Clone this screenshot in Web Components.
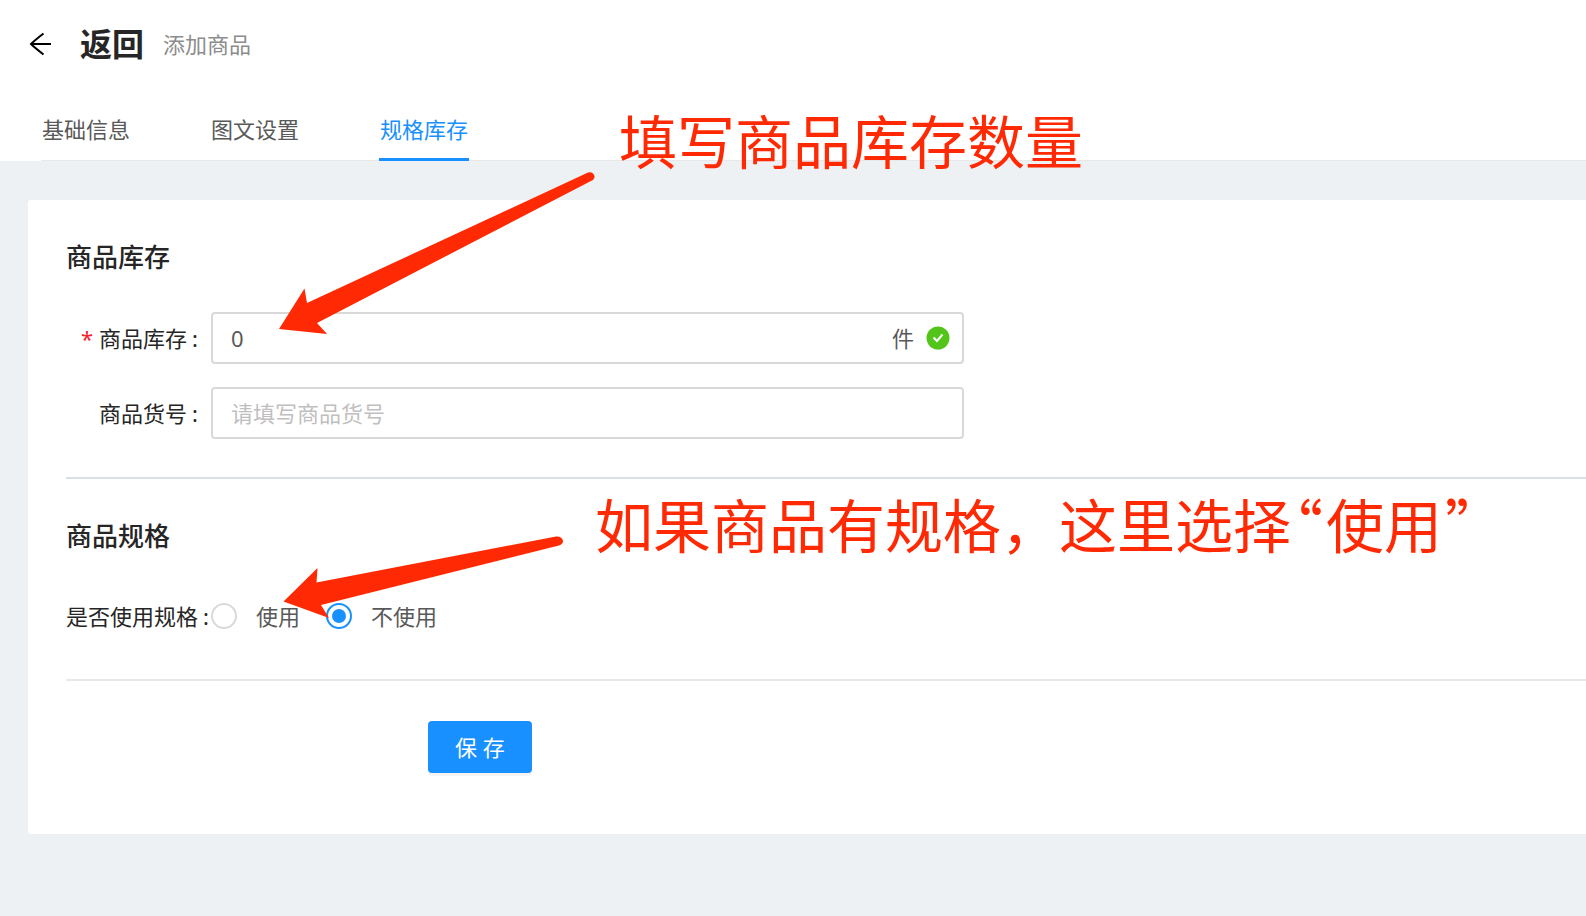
<!DOCTYPE html>
<html lang="zh-CN">
<head>
<meta charset="UTF-8">
<meta name="viewport" content="width=device-width, initial-scale=1">
<title>添加商品</title>
<style>
  body {
    margin: 0;
    min-height: 100vh;
    position: relative;
    overflow-x: hidden;
    background: #edf1f4;
    font-family: "Noto Sans", "Noto Sans CJK SC", sans-serif;
    font-size: 22px;
    line-height: 36px;
    color: #595959;
    --color-primary: #1890ff;
    --color-heading: #262626;
    --color-border: #d9d9d9;
    --color-mark: #ff2a04;
  }
</style>
</head>
<body>
  <page-header heading="返回" subtitle="添加商品">
    <page-tab>基础信息</page-tab>
    <page-tab>图文设置</page-tab>
    <page-tab active>规格库存</page-tab>
  </page-header>

  <form-card>
    <form-section heading="商品库存">
      <text-field label="商品库存" value="0" suffix="件" required valid></text-field>
      <text-field label="商品货号" placeholder="请填写商品货号"></text-field>
    </form-section>
    <form-section heading="商品规格">
      <radio-field label="是否使用规格" options="使用,不使用" selected="不使用"></radio-field>
    </form-section>
    <save-button>保 存</save-button>
  </form-card>

  <guide-notes></guide-notes>

<script>
// Base class: clones the given markup into an open shadow root
class BaseElement extends HTMLElement {
  constructor() {
    super();
    this.attachShadow({ mode: 'open' });
  }

  connectedCallback() {
    const template = document.createElement('template');
    template.innerHTML = this.render();
    this.shadowRoot.innerHTML = '';
    this.shadowRoot.appendChild(template.content.cloneNode(true));
  }
}

// Title row with the back arrow, and the tab bar under it
class PageHeader extends BaseElement {
  render() {
    return `
      <style>
        :host {
          display: block;
          background: #fff;
        }
        .top {
          display: flex;
          align-items: center;
          height: 88px;
          padding-left: 28px;
        }
        .back {
          display: flex;
          padding: 0;
          border: 0;
          background: none;
          cursor: pointer;
        }
        h1 {
          margin: 0 19px 0 28px;
          font-size: 32px;
          font-weight: 700;
          color: var(--color-heading);
        }
        .subtitle {
          color: #8c8c8c;
        }
        nav {
          display: flex;
          gap: 79px;
          height: 72px;
          margin-left: 41px;
          border-bottom: 1px solid #e8e8e8;
        }
      </style>
      <div class="top">
        <button class="back" type="button" aria-label="返回">
          <svg width="24" height="24" viewBox="0 0 24 24" fill="none" stroke="#000" stroke-width="2">
            <path d="M23 12H3M15.500 1.500C11 5 6 9 3 12C6 15 11 19 15.500 22.500"/>
          </svg>
        </button>
        <h1>${this.getAttribute('heading')}</h1>
        <span class="subtitle">${this.getAttribute('subtitle')}</span>
      </div>
      <nav><slot></slot></nav>
    `;
  }
}

class PageTab extends BaseElement {
  render() {
    return `
      <style>
        :host {
          display: flex;
          margin-bottom: -1px;
        }
        a {
          padding: 23px 1px 11px;
          border-bottom: 3px solid transparent;
          color: inherit;
          text-decoration: none;
        }
        :host([active]) a {
          color: var(--color-primary);
          border-color: var(--color-primary);
        }
      </style>
      <a href="#"><slot></slot></a>
    `;
  }
}

class FormCard extends BaseElement {
  render() {
    return `
      <style>
        :host {
          display: block;
          margin: 39px 0 0 28px;
          padding: 0 0 61px 38px;
          background: #fff;
          border-radius: 3px 0 0 3px;
        }
      </style>
      <slot></slot>
    `;
  }
}

class FormSection extends BaseElement {
  render() {
    return `
      <style>
        :host {
          display: block;
          padding: 39px 0 38px;
          border-bottom: 2px solid #d9dfe6;
        }
        :host(:last-of-type) {
          border-color: #e8e8e8;
        }
        h2 {
          margin: 0 0 37px;
          font-size: 26px;
          font-weight: 500;
          color: var(--color-heading);
        }
        .fields {
          display: grid;
          gap: 23px;
        }
      </style>
      <h2>${this.getAttribute('heading')}</h2>
      <div class="fields"><slot></slot></div>
    `;
  }
}

class TextField extends BaseElement {
  render() {
    const suffix = this.getAttribute('suffix') || '';
    // green round tick shown when the value passed validation
    const tick = `
      <svg width="24" height="24" viewBox="0 0 24 24" fill="none">
        <circle cx="12" cy="12" r="11.5" fill="#52c41a"/>
        <path d="M7.500 11.500L11 15L16.500 8.500" stroke="#fff" stroke-width="2"/>
      </svg>`;
    return `
      <style>
        :host {
          display: grid;
          grid-template-columns: 145px minmax(0, 753px);
          align-items: center;
        }
        label {
          padding-right: 13px;
          text-align: right;
          white-space: nowrap;
          color: var(--color-heading);
        }
        .star {
          margin-right: 6px;
          color: #f5222d;
        }
        .colon {
          margin-left: 5px;
        }
        .box {
          display: flex;
          align-items: center;
          gap: 12px;
          box-sizing: border-box;
          height: 52px;
          padding: 0 12px 0 18px;
          border: 2px solid var(--color-border);
          border-radius: 4px;
          background: #fff;
        }
        input {
          flex: 1;
          min-width: 0;
          padding: 0;
          border: 0;
          outline: 0;
          font: inherit;
          color: inherit;
          background: none;
        }
        input::placeholder {
          color: #bfbfbf;
        }
      </style>
      <label for="field">${this.hasAttribute('required') ? '<span class="star">*</span>' : ''}${this.getAttribute('label')}<span class="colon">:</span></label>
      <div class="box">
        <input id="field" type="text" value="${this.getAttribute('value') || ''}" placeholder="${this.getAttribute('placeholder') || ''}">
        ${suffix ? `<span>${suffix}</span>` : ''}
        ${this.hasAttribute('valid') ? tick : ''}
      </div>
    `;
  }
}

class RadioField extends BaseElement {
  render() {
    const selected = this.getAttribute('selected');
    const options = this.getAttribute('options').split(',');
    return `
      <style>
        :host {
          display: block;
        }
        fieldset {
          display: grid;
          grid-template-columns: 145px auto;
          align-items: center;
          margin: 0;
          padding: 7px 0;
          border: 0;
        }
        .name {
          white-space: nowrap;
          color: var(--color-heading);
        }
        .colon {
          margin-left: 5px;
        }
        .options {
          display: flex;
          gap: 26px;
        }
        label {
          display: flex;
          align-items: center;
          gap: 19px;
        }
        input {
          appearance: none;
          display: grid;
          place-items: center;
          box-sizing: border-box;
          width: 26px;
          height: 26px;
          margin: 0;
          border: 2px solid var(--color-border);
          border-radius: 50%;
          background: #fff;
        }
        input:checked {
          border-color: var(--color-primary);
        }
        input:checked::before {
          content: "";
          width: 14px;
          height: 14px;
          border-radius: 50%;
          background: var(--color-primary);
        }
      </style>
      <fieldset aria-labelledby="name">
        <span class="name" id="name">${this.getAttribute('label')}<span class="colon">:</span></span>
        <div class="options">
          ${options.map((option) => `<label><input type="radio" name="spec" ${option === selected ? 'checked' : ''}>${option}</label>`).join('')}
        </div>
      </fieldset>
    `;
  }
}

class SaveButton extends BaseElement {
  render() {
    return `
      <style>
        :host {
          display: block;
          margin: 40px 0 0 362px;
        }
        button {
          display: block;
          height: 52px;
          padding: 0 27px;
          border: 0;
          border-radius: 4px;
          font: inherit;
          color: #fff;
          background: var(--color-primary);
          box-shadow: 0 3px 0 rgba(0, 0, 0, 0.045);
          cursor: pointer;
        }
      </style>
      <button type="button"><slot></slot></button>
    `;
  }
}

// Red hand-placed notes and arrows that lie over the form
class GuideNotes extends BaseElement {
  render() {
    return `
      <style>
        :host {
          position: absolute;
          inset: 0;
          overflow: hidden;
          pointer-events: none;
          color: var(--color-mark);
        }
        svg {
          position: absolute;
          left: 0;
          top: 0;
        }
        p {
          position: absolute;
          margin: 0;
          font-size: 58px;
          line-height: 84px;
          white-space: nowrap;
        }
        .stock {
          left: 619px;
          top: 100px;
        }
        .spec {
          left: 595px;
          top: 484px;
        }
        /* half-width Chinese quotation marks; no line height, so the line keeps its baseline */
        .quote {
          margin: 0 3px;
          font-family: "Noto Sans CJK SC", sans-serif;
          font-feature-settings: "halt";
          line-height: 0;
        }
      </style>
      <svg width="620" height="640" viewBox="0 0 620 640" fill="currentColor" aria-hidden="true">
        <path d="M279 329L304.500 288.500L307 303L588 172.500Q593 171 594.500 176Q595 179 591 181L317 323L327 334Z"/>
        <path d="M283.500 601.500L317.500 568L316.500 582.500L556 536.500Q562 536 563 541Q563 544 559 545.500L321 605L329 618Z"/>
      </svg>
      <p class="stock">填写商品库存数量</p>
      <p class="spec">如果商品有规格，这里选择<span class="quote">“</span>使用<span class="quote">”</span></p>
    `;
  }
}

customElements.define('page-header', PageHeader);
customElements.define('page-tab', PageTab);
customElements.define('form-card', FormCard);
customElements.define('form-section', FormSection);
customElements.define('text-field', TextField);
customElements.define('radio-field', RadioField);
customElements.define('save-button', SaveButton);
customElements.define('guide-notes', GuideNotes);
</script>
</body>
</html>
